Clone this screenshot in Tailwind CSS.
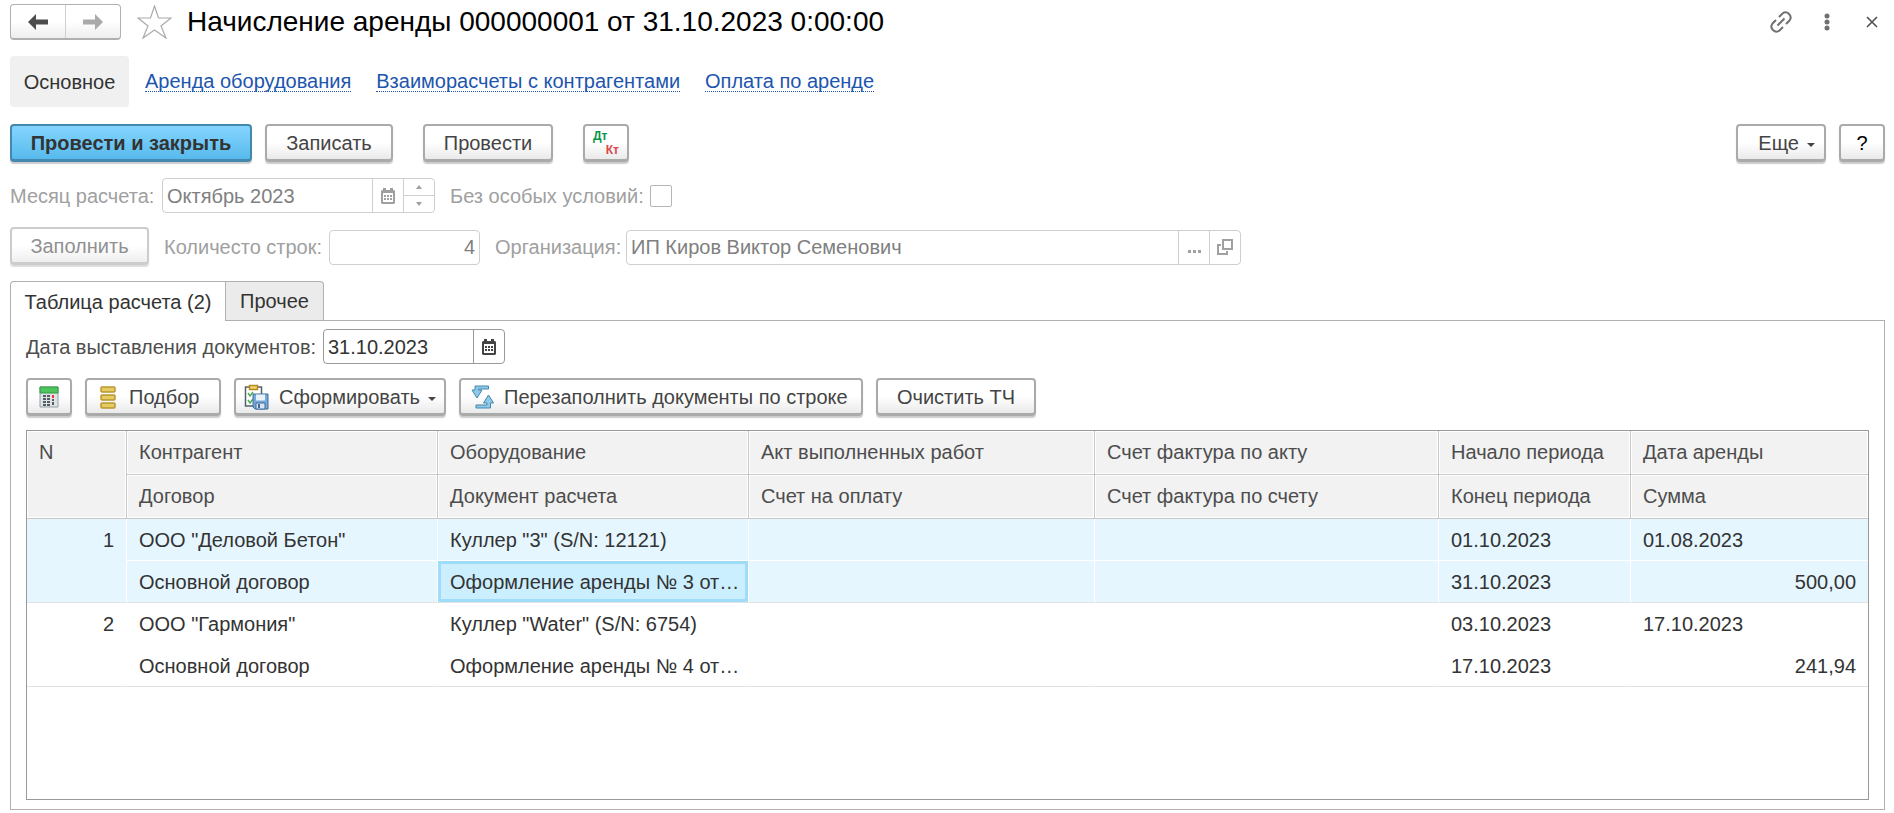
<!DOCTYPE html>
<html lang="ru">
<head>
<meta charset="utf-8">
<meta name="viewport" content="width=device-width, initial-scale=1">
<title>Начисление аренды</title>
<script src="https://cdn.jsdelivr.net/npm/@tailwindcss/browser@4"></script>
</head>
<body class="flex min-h-screen flex-col bg-white pr-[9px] pb-[3px] pl-[10px] font-['Liberation_Sans',Arial,sans-serif] text-[20px] leading-6 text-[#333]">

<svg class="hidden" aria-hidden="true">
  <symbol id="calendar" viewBox="0 0 14 16"><path fill="currentColor" fill-rule="evenodd" d="M2 0h3v2h4V0h3v2h1l1 1v12l-1 1H1l-1-1V3l1-1h1zM2 5v9h10V5z"/><path fill="currentColor" d="M3 7h2v2H3zm3 0h2v2H6zm3 0h2v2H9zm-6 3h2v2H3zm3 0h2v2H6zm3 0h2v2H9z"/></symbol>
</svg>

<header class="flex items-center pt-1">
  <div class="flex h-9 w-[111px] rounded border border-b-2 border-[#b0b0b0] bg-linear-to-b from-white from-50% to-[#eeeeee]">
    <button class="flex flex-1 items-center justify-center border-r border-[#d0d0d0]" aria-label="Назад"><svg class="size-5 h-4" viewBox="0 0 20 16"><path d="M0 8l8-8v5.500h12v5H8V16z" fill="#4c4c4c"/></svg></button>
    <button class="flex flex-1 items-center justify-center" aria-label="Вперед"><svg class="size-5 h-4" viewBox="0 0 20 16"><path d="M20 8l-8-8v5.500H0v5h12V16z" fill="#aaa"/></svg></button>
  </div>
  <button class="ml-4" aria-label="В избранное"><svg class="h-[34px] w-[35px]" viewBox="0 0 35 34"><path d="M17.500 1l4 12H34l-10 8 5 12-11.500-8L6 33l5-12-10-8h12.500z" fill="#fff" stroke="#aaa" stroke-width="1.200"/></svg></button>
  <h1 class="ml-[15px] text-[28px] leading-9 text-black">Начисление аренды 000000001 от 31.10.2023 0:00:00</h1>
  <div class="ml-auto flex items-center pr-[7px]">
    <button aria-label="Ссылка"><svg class="h-6 w-6" viewBox="0 0 24 24" fill="none" stroke="#707070" stroke-width="2"><path d="M8.500 15.500l7-7M10 7l3.500-3.500a5 5 0 0 1 7 7L17 14M14 17l-3.500 3.500a5 5 0 0 1-7-7L7 10"/></svg></button>
    <button class="ml-[30px]" aria-label="Меню"><svg class="h-5 w-2" viewBox="0 0 8 20" fill="#707070"><circle cx="4" cy="4" r="2.500"/><circle cx="4" cy="10" r="2.500"/><circle cx="4" cy="16" r="2.500"/></svg></button>
    <button class="ml-[35px]" aria-label="Закрыть"><svg class="size-3" viewBox="0 0 12 12" stroke="#505050" stroke-width="1.600"><path d="M1 1l10 10M11 1L1 11"/></svg></button>
  </div>
</header>

<nav class="mt-4 flex h-[51px] items-center gap-[25px] text-[#1c55ae]">
  <a href="#" class="-mr-[9px] flex h-full w-[119px] items-center justify-center rounded bg-[#f0f0f0] text-[#333]">Основное</a>
  <a href="#" class="border-b border-dotted border-[#1c55ae] leading-5">Аренда оборудования</a>
  <a href="#" class="border-b border-dotted border-[#1c55ae] leading-5">Взаиморасчеты с контрагентами</a>
  <a href="#" class="border-b border-dotted border-[#1c55ae] leading-5">Оплата по аренде</a>
</nav>

<div class="mt-[17px] flex text-[#444]">
  <button class="h-[38px] w-[242px] rounded border-2 border-b-3 border-[#4489ad] bg-linear-to-b from-[#84d5ff] to-[#57baec] font-bold text-[#333] shadow-[0_2px_1px_#ccc]">Провести и закрыть</button>
  <button class="ml-[13px] h-[38px] w-32 rounded border-2 border-b-3 border-[#aaa] bg-linear-to-b from-white from-50% to-[#eaeaea] shadow-[0_2px_1px_#ccc]">Записать</button>
  <button class="ml-[30px] h-[38px] w-[130px] rounded border-2 border-b-3 border-[#aaa] bg-linear-to-b from-white from-50% to-[#eaeaea] shadow-[0_2px_1px_#ccc]">Провести</button>
  <button class="ml-[30px] flex h-[38px] w-[46px] flex-col items-start justify-center rounded border-2 border-b-3 border-[#aaa] bg-linear-to-b from-white from-50% to-[#eaeaea] px-2 text-[12px] leading-[14px] font-bold shadow-[0_2px_1px_#ccc]"><span class="text-[#0a9448]">Дт</span><span class="self-end text-[#d9474a]">Кт</span></button>
  <button class="ml-auto flex h-[38px] w-[90px] items-center justify-end gap-2 rounded border-2 border-b-3 border-[#aaa] bg-linear-to-b from-white from-50% to-[#eaeaea] pr-[9px] shadow-[0_2px_1px_#ccc]">Еще<svg class="mt-1 h-1 w-2" viewBox="0 0 8 4"><path d="M0 0h8L4 4z" fill="#444"/></svg></button>
  <button class="ml-[13px] h-[38px] w-[46px] rounded border-2 border-b-3 border-[#aaa] bg-linear-to-b from-white from-50% to-[#eaeaea] text-black shadow-[0_2px_1px_#ccc]">?</button>
</div>

<div class="mt-4 flex items-center text-[#a0a0a0]">
  <label for="month" class="w-[152px]">Месяц расчета:</label>
  <div class="flex h-[35px] w-[273px] rounded border border-[#cfcfcf]">
    <input id="month" disabled value="Октябрь 2023" class="min-w-0 flex-1 px-1 text-[#808080]">
    <button disabled class="flex w-[31px] items-center justify-center border-l border-[#cfcfcf]" aria-label="Выбрать месяц"><svg class="h-4 w-[14px]"><use href="#calendar"/></svg></button>
    <div class="flex w-[31px] flex-col border-l border-[#cfcfcf]">
      <button disabled class="flex flex-1 items-center justify-center border-b border-[#cfcfcf]" aria-label="Следующий месяц"><svg class="h-1 w-[6px]" viewBox="0 0 6 4"><path d="M0 4h6L3 0z" fill="#a0a0a0"/></svg></button>
      <button disabled class="flex flex-1 items-center justify-center" aria-label="Предыдущий месяц"><svg class="h-1 w-[6px]" viewBox="0 0 6 4"><path d="M0 0h6L3 4z" fill="#a0a0a0"/></svg></button>
    </div>
  </div>
  <label for="special" class="ml-[15px] w-[200px]">Без особых условий:</label>
  <input id="special" type="checkbox" disabled class="size-[22px] appearance-none rounded-[2px] border border-[#b5b5b5] bg-white">
</div>

<div class="mt-[14px] flex items-center text-[#a0a0a0]">
  <button disabled class="mb-[2px] h-[38px] w-[139px] rounded border-2 border-b-3 border-[#ccc] bg-linear-to-b from-white from-50% to-[#efefef] text-[#909090] shadow-[0_2px_1px_#ddd]">Заполнить</button>
  <label for="count" class="ml-[15px] w-[165px]">Количесто строк:</label>
  <input id="count" disabled value="4" class="h-[35px] w-[151px] rounded border border-[#cfcfcf] px-1 text-right text-[#808080]">
  <label for="org" class="ml-[15px] w-[131px]">Организация:</label>
  <div class="flex h-[35px] w-[615px] rounded border border-[#cfcfcf]">
    <input id="org" disabled value="ИП Киров Виктор Семенович" class="min-w-0 flex-1 px-1 text-[#808080]">
    <button disabled class="flex w-[31px] items-center justify-center border-l border-[#cfcfcf] pt-2" aria-label="Выбрать"><svg class="h-[3px] w-[13px]" viewBox="0 0 13 3"><path d="M0 0h3v3H0zm5 0h3v3H5zm5 0h3v3h-3z" fill="#a0a0a0"/></svg></button>
    <button disabled class="flex w-[31px] items-center justify-center border-l border-[#cfcfcf]" aria-label="Открыть"><svg class="size-4" viewBox="0 0 16 16" fill="none" stroke="#a0a0a0" stroke-width="2"><path d="M6 1h9v9H6zM4 6H1v9h9v-3"/></svg></button>
  </div>
</div>

<div class="relative z-10 mt-[14px] -mb-px flex h-10">
  <button class="w-[216px] rounded-tl border border-b-0 border-[#b0b0b0] bg-white">Таблица расчета (2)</button>
  <button class="w-[98px] rounded-tr border border-l-0 border-[#b0b0b0] bg-[#ebebeb]">Прочее</button>
</div>

<main class="flex flex-1 flex-col border border-[#b0b0b0] px-[15px] pt-2 pb-[9px]">
  <div class="flex items-center text-[#4d4d4d]">
    <label for="date" class="w-[297px]">Дата выставления документов:</label>
    <div class="flex h-[35px] w-[182px] rounded border border-[#999]">
      <input id="date" value="31.10.2023" class="min-w-0 flex-1 px-1 text-[#333]">
      <button class="flex w-[31px] items-center justify-center border-l border-[#999] text-[#444]" aria-label="Выбрать дату"><svg class="h-4 w-[14px]"><use href="#calendar"/></svg></button>
    </div>
  </div>

  <div class="mt-[14px] flex gap-[13px] text-[#444]">
    <button class="flex h-[38px] w-[46px] items-center justify-center rounded border-2 border-b-3 border-[#aaa] bg-linear-to-b from-white from-50% to-[#eaeaea] shadow-[0_2px_1px_#ccc]" aria-label="Рассчитать"><svg class="h-[22px] w-5" viewBox="0 0 20 22"><path d="M1 1h18v20H1z" fill="#dfe3e6" stroke="#8fa0ad"/><path d="M1 1h18v6H1z" fill="#4fc35c" stroke="#319b42"/><path d="M4 9h3v2H4zm4 0h3v2H8zm-4 3h3v2H4zm4 0h3v2H8zm5 1h2v2h-2zm-9 2h3v2H4zm4 0h3v2H8zm5 1h2v3h-2zm-9 2h3v2H4zm4 0h3v2H8z" fill="#555d63"/><path d="M13 9h2v3h-2z" fill="#f33"/></svg></button>
    <button class="flex h-[38px] w-[136px] items-center gap-[13px] rounded border-2 border-b-3 border-[#aaa] bg-linear-to-b from-white from-50% to-[#eaeaea] pl-[13px] shadow-[0_2px_1px_#ccc]"><svg class="h-6 w-4" viewBox="0 0 16 24" fill="#e5cc62" stroke="#b8962f" stroke-width="1.500"><rect x="1" y="2" width="14" height="5" rx="1"/><rect x="1" y="10" width="14" height="5" rx="1"/><rect x="1" y="18" width="14" height="5" rx="1"/></svg>Подбор</button>
    <button class="flex h-[38px] w-[212px] items-center rounded border-2 border-b-3 border-[#aaa] bg-linear-to-b from-white from-50% to-[#eaeaea] pl-2 shadow-[0_2px_1px_#ccc]"><svg class="mr-[10px] h-[26px] w-[25px]" viewBox="0 0 25 26"><path d="M1.500 3h16v19h-16z" fill="#fff" stroke="#54616c" stroke-width="1.500"/><path d="M5.500 1.500h8v4h-8z" fill="#f3d671" stroke="#b58a21" stroke-width="1.500"/><path d="M4 9l2 3 3-4M4 16l2 3 3-4" fill="none" stroke="#4caf50" stroke-width="1.500"/><path d="M9 10h15v15H11l-2-2z" fill="#78a9d8" stroke="#3c6a9c"/><path d="M12 10.500h9v6h-9z" fill="#e8f2fb"/><path d="M12 19h9v6h-9z" fill="#dbe5ee" stroke="#3c6a9c"/><path d="M14 20h2v4h-2z" fill="#3c6a9c"/></svg>Сформировать<svg class="mt-1 ml-2 h-1 w-2" viewBox="0 0 8 4"><path d="M0 0h8L4 4z" fill="#444"/></svg></button>
    <button class="flex h-[38px] w-[404px] items-center gap-[10px] rounded border-2 border-b-3 border-[#aaa] bg-linear-to-b from-white from-50% to-[#eaeaea] pl-[10px] shadow-[0_2px_1px_#ccc]"><svg class="h-6 w-[23px]" viewBox="0 0 23 24" fill="#8ec9ea" stroke="#4387ab"><path d="M17.500 1H4v4H1l5 8 5-8H7.500V4h10zM5 23h14.500v-5h3l-5-8-5 8H16v2H5z"/></svg>Перезаполнить документы по строке</button>
    <button class="h-[38px] w-[160px] rounded border-2 border-b-3 border-[#aaa] bg-linear-to-b from-white from-50% to-[#eaeaea] shadow-[0_2px_1px_#ccc]">Очистить ТЧ</button>
  </div>

  <div class="mt-[14px] flex-1 border border-[#999]">
    <table class="w-full table-fixed border-separate border-spacing-0 text-left [&_td]:h-[42px] [&_td]:truncate [&_td]:px-3 [&_th]:h-11 [&_th]:border-r [&_th]:border-b [&_th]:border-[#c8c8c8] [&_th]:bg-[#f2f2f2] [&_th]:px-3 [&_th]:pb-[2px] [&_th]:font-normal [&_th]:text-[#4d4d4d] [&_th]:shadow-[inset_0_0_0_1px_#fff] [&_th:last-child]:border-r-0">
      <colgroup><col class="w-[100px]"><col class="w-[311px]"><col class="w-[311px]"><col class="w-[346px]"><col class="w-[344px]"><col class="w-[192px]"><col></colgroup>
      <thead>
        <tr><th rowspan="2" class="pt-[9px] align-top">N</th><th>Контрагент</th><th>Оборудование</th><th>Акт выполненных работ</th><th>Счет фактура по акту</th><th>Начало периода</th><th>Дата аренды</th></tr>
        <tr><th>Договор</th><th>Документ расчета</th><th>Счет на оплату</th><th>Счет фактура по счету</th><th>Конец периода</th><th>Сумма</th></tr>
      </thead>
      <tbody class="bg-[#e5f6ff] [&_td]:border-r [&_td]:border-b [&_td]:border-white [&_td:last-child]:border-r-0">
        <tr><td rowspan="2" class="border-b-[#e2e2e2]! pt-[9px] text-right align-top">1</td><td>ООО "Деловой Бетон"</td><td>Куллер "3" (S/N: 12121)</td><td></td><td></td><td>01.10.2023</td><td>01.08.2023</td></tr>
        <tr class="[&_td]:border-b-[#e2e2e2]!"><td>Основной договор</td><td class="bg-[#ccefff] pr-1! shadow-[inset_0_0_0_3px_#9edcf9]">Оформление аренды № 3 от…</td><td></td><td></td><td>31.10.2023</td><td class="text-right">500,00</td></tr>
      </tbody>
      <tbody class="[&_td]:border-r [&_td]:border-b [&_td]:border-white [&_td:last-child]:border-r-0">
        <tr><td rowspan="2" class="border-b-[#e2e2e2]! pt-[9px] text-right align-top">2</td><td>ООО "Гармония"</td><td>Куллер "Water" (S/N: 6754)</td><td></td><td></td><td>03.10.2023</td><td>17.10.2023</td></tr>
        <tr class="[&_td]:border-b-[#e2e2e2]!"><td>Основной договор</td><td class="pr-1!">Оформление аренды № 4 от…</td><td></td><td></td><td>17.10.2023</td><td class="text-right">241,94</td></tr>
      </tbody>
    </table>
  </div>
</main>
</body>
</html>
